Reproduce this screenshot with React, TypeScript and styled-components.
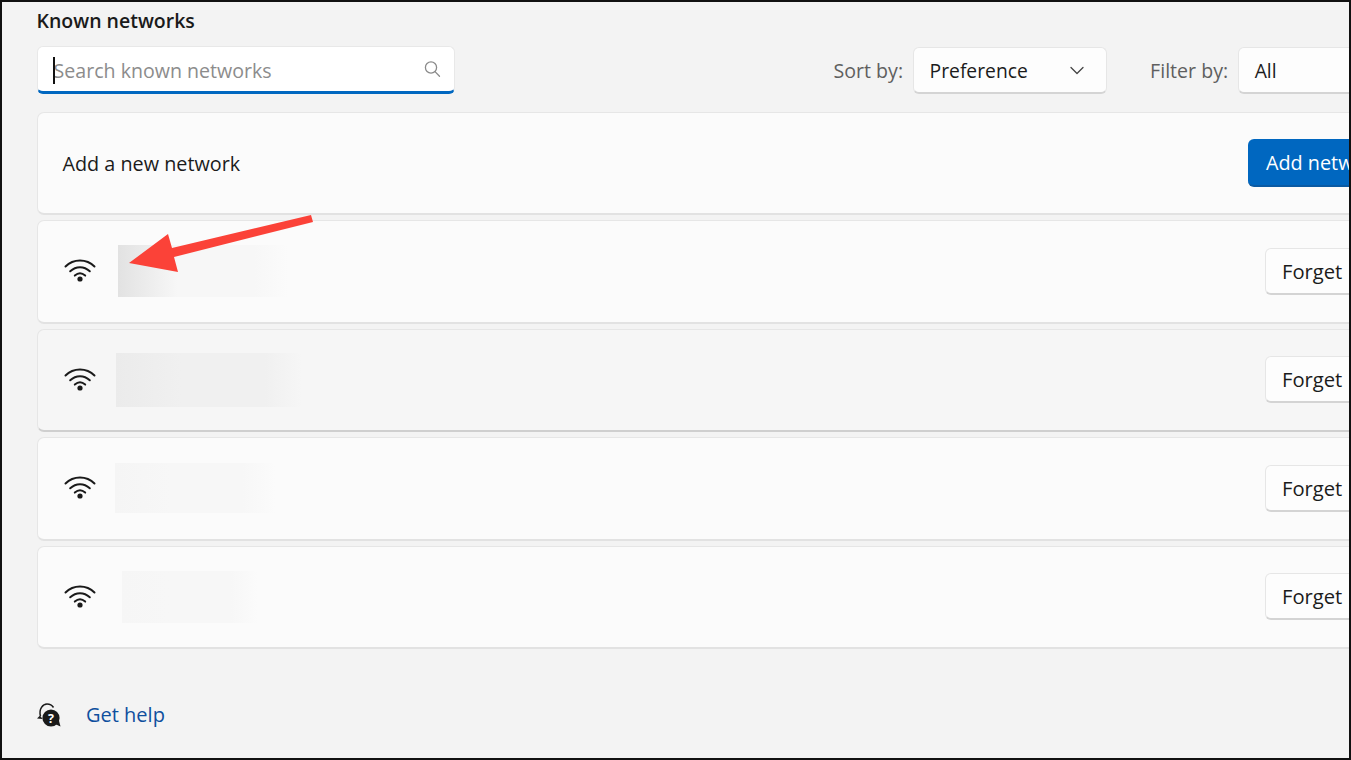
import React from 'react';
import styled, { createGlobalStyle } from 'styled-components';

const GlobalStyle = createGlobalStyle`
  html, body {
    margin: 0;
    padding: 0;
    background: #f3f3f3;
    overflow: hidden;
  }
  * {
    box-sizing: border-box;
  }
`;

const Frame = styled.div`
  position: relative;
  width: 1351px;
  height: 760px;
  overflow: hidden;
  background: #f3f3f3;
  border: 2px solid #111;
  font-family: 'Open Sans', 'Noto Sans', sans-serif;
  color: #1b1b1b;
`;

const Content = styled.div`
  width: 1460px;
  padding: 6px 0 0 34.5px;
`;

const Title = styled.h2`
  margin: 0;
  font-size: 19.5px;
  line-height: 26px;
  font-weight: 600;
  color: #1a1a1a;
`;

const Toolbar = styled.div`
  display: flex;
  align-items: center;
  margin-top: 12px;
  height: 48px;
`;

const SearchBox = styled.div`
  display: flex;
  align-items: center;
  justify-content: space-between;
  width: 418.5px;
  height: 48px;
  padding: 0 13px 0 16px;
  background: #fff;
  border: 1px solid #e8e8e8;
  border-bottom: 3px solid #0067c0;
  border-radius: 6px;
`;

const Placeholder = styled.span`
  position: relative;
  top: 1px;
  font-size: 19.6px;
  color: #8c8c8c;
  &::before {
    content: '';
    position: absolute;
    left: -1px;
    top: 0;
    width: 2px;
    height: 27px;
    background: #111;
  }
`;

const SortGroup = styled.div`
  display: flex;
  align-items: center;
  margin-left: 378.5px;
`;

const FilterGroup = styled(SortGroup)`
  margin-left: 43.5px;
`;

const SortLabel = styled.span`
  font-size: 19.6px;
  color: #5f5f5f;
  margin-right: 9.5px;
`;

const Select = styled.div<{ $width: number }>`
  display: flex;
  align-items: center;
  justify-content: space-between;
  width: ${(p) => p.$width}px;
  height: 47px;
  padding: 2px 22px 0 16px;
  font-size: 19.3px;
  color: #1b1b1b;
  background: #fdfdfd;
  border: 1px solid #e6e6e6;
  border-bottom: 2px solid #d4d4d4;
  border-radius: 6px;
`;

const CardList = styled.div`
  display: flex;
  flex-direction: column;
  gap: 5px;
  margin-top: 17.5px;
`;

const Card = styled.div<{ $hover?: boolean }>`
  display: flex;
  align-items: center;
  justify-content: space-between;
  height: 103.5px;
  padding: 0 24px 0 25px;
  background: ${(p) => (p.$hover ? '#f6f6f6' : '#fbfbfb')};
  border: 1px solid #e6e6e6;
  border-bottom: ${(p) => (p.$hover ? '2px solid #cfcfcf' : '2px solid #e2e2e2')};
  border-radius: 7px;
`;

const CardLead = styled.div`
  display: flex;
  align-items: center;
`;

const CardLabel = styled.span`
  position: relative;
  top: 1px;
  font-size: 19.8px;
  color: #1b1b1b;
`;

const WifiWrap = styled.div`
  display: flex;
  width: 48px;
  margin: -2px 0 0 1.5px;
`;

const Redacted = styled.div<{ $width: number; $height: number; $offset: number; $shade: string; $mid: string }>`
  width: ${(p) => p.$width}px;
  height: ${(p) => p.$height}px;
  margin-left: ${(p) => p.$offset}px;
  background: linear-gradient(
    90deg,
    ${(p) => p.$shade},
    ${(p) => p.$mid} 35%,
    ${(p) => p.$mid} 80%,
    rgba(250, 250, 250, 0)
  );
`;

const AddButton = styled.div`
  display: flex;
  align-items: center;
  width: 172px;
  height: 48px;
  padding: 1px 0 0 18px;
  font-size: 19.8px;
  color: #fff;
  background: #0067c0;
  border-bottom: 2px solid #0a5aa3;
  border-radius: 6px;
  margin-right: 17px;
`;

const ForgetButton = styled.div`
  display: flex;
  align-items: center;
  width: 110px;
  height: 47px;
  padding-left: 16px;
  font-size: 20.2px;
  color: #1b1b1b;
  background: #fdfdfd;
  border: 1px solid #e6e6e6;
  border-bottom: 2px solid #d4d4d4;
  border-radius: 6px;
  margin-right: 62px;
`;

const HelpRow = styled.div`
  display: flex;
  align-items: center;
  gap: 24px;
  margin: 51.5px 0 0 -0.5px;
`;

const HelpLink = styled.a`
  font-size: 20px;
  color: #0f4f9e;
`;

const Arrow = styled.svg`
  position: absolute;
  left: 0;
  top: 0;
  pointer-events: none;
`;

const WifiIcon = () => (
  <svg width="32" height="24" viewBox="0 0 32 24" fill="none" stroke="#1a1a1a" strokeWidth="2" strokeLinecap="round">
    <path d="M1.5 8.5C9.5 0.5 22.5 0.5 30.5 8.5" />
    <path d="M6.2 13.2C12 7.8 20 7.8 25.8 13.2" />
    <path d="M10.8 17.6C14 14.8 18 14.8 21.2 17.6" />
    <circle cx="16" cy="21" r="2.6" fill="#1a1a1a" stroke="none" />
  </svg>
);

const SearchIcon = () => (
  <svg width="18" height="18" viewBox="0 0 18 18" fill="none" stroke="#8a8a8a" strokeWidth="1.3">
    <circle cx="8" cy="7.5" r="5.6" />
    <path d="M12 11.6L16.5 16.2" strokeLinecap="round" />
  </svg>
);

const ChevronIcon = () => (
  <svg width="14" height="9" viewBox="0 0 14 9" fill="none" stroke="#444" strokeWidth="1.3" strokeLinecap="round" strokeLinejoin="round">
    <path d="M1 1.5L7 7.5L13 1.5" />
  </svg>
);

const HelpIcon = () => (
  <svg width="26" height="28" viewBox="0 0 26 28">
    <path d="M4.5 15C2.5 8 7 3 11 3C13.5 3 16 4 17.5 6.5" fill="none" stroke="#1a1a1a" strokeWidth="1.5" />
    <path d="M1 17.5L4 14.5L6.5 18Z" fill="#1a1a1a" />
    <circle cx="15" cy="17" r="8.6" fill="#1a1a1a" />
    <path d="M19 23L24.5 25.5L22.5 18Z" fill="#1a1a1a" />
    <text x="15" y="21.5" textAnchor="middle" fontSize="12.5" fontWeight="700" fontFamily="'Open Sans', sans-serif" fill="#fff">?</text>
  </svg>
);

const networks = [
  { width: 170, height: 52, offset: 6, shade: '#e2e2e2', mid: '#f7f7f7', hover: false },
  { width: 186, height: 54, offset: 4, shade: '#ebebeb', mid: '#f0f0f0', hover: true },
  { width: 160, height: 50, offset: 3, shade: '#f5f5f5', mid: '#f7f7f7', hover: false },
  { width: 136, height: 52, offset: 10, shade: '#f6f6f6', mid: '#f7f7f7', hover: false },
];

const App: React.FC = () => (
  <>
    <GlobalStyle />
    <Frame>
      <Content>
        <Title>Known networks</Title>
        <Toolbar>
          <SearchBox>
            <Placeholder>Search known networks</Placeholder>
            <SearchIcon />
          </SearchBox>
          <SortGroup>
            <SortLabel>Sort by:</SortLabel>
            <Select $width={194}>
              Preference
              <ChevronIcon />
            </Select>
          </SortGroup>
          <FilterGroup>
            <SortLabel>Filter by:</SortLabel>
            <Select $width={180}>All</Select>
          </FilterGroup>
        </Toolbar>
        <CardList>
          <Card>
            <CardLabel>Add a new network</CardLabel>
            <AddButton>Add network</AddButton>
          </Card>
          {networks.map((n) => (
            <Card key={n.width} $hover={n.hover}>
              <CardLead>
                <WifiWrap>
                  <WifiIcon />
                </WifiWrap>
                <Redacted $width={n.width} $height={n.height} $offset={n.offset} $shade={n.shade} $mid={n.mid} />
              </CardLead>
              <ForgetButton>Forget</ForgetButton>
            </Card>
          ))}
        </CardList>
        <HelpRow>
          <HelpIcon />
          <HelpLink>Get help</HelpLink>
        </HelpRow>
      </Content>
      <Arrow width="400" height="300" viewBox="0 0 400 300">
        <path d="M313 222L174 257L178 272L129 263L168 234L172 248L311 215Z" transform="translate(-2 -2)" fill="#fb4238" />
      </Arrow>
    </Frame>
  </>
);

export default App;
